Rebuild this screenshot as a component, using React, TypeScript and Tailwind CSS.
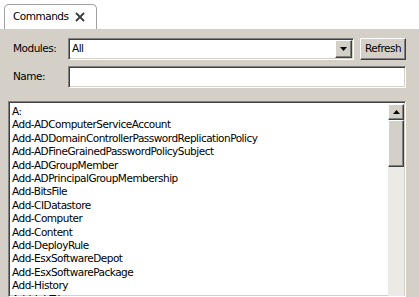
import { Fragment } from "react";

const commands = [
  "A:",
  "Add-ADComputerServiceAccount",
  "Add-ADDomainControllerPasswordReplicationPolicy",
  "Add-ADFineGrainedPasswordPolicySubject",
  "Add-ADGroupMember",
  "Add-ADPrincipalGroupMembership",
  "Add-BitsFile",
  "Add-CIDatastore",
  "Add-Computer",
  "Add-Content",
  "Add-DeployRule",
  "Add-EsxSoftwareDepot",
  "Add-EsxSoftwarePackage",
  "Add-History",
  "Add-JobTrigger",
  "Add-Member",
];

const sunken =
  "border border-t-[#808080] border-l-[#808080] border-b-white border-r-white shadow-[inset_1px_1px_0_#404040,inset_-1px_-1px_0_#d4d0c8] bg-white";
const raised =
  "border border-t-white border-l-white border-b-[#404040] border-r-[#404040] shadow-[inset_-1px_-1px_0_#808080,inset_1px_1px_0_#d4d0c8] bg-[#d4d0c8]";

export default function App() {
  return (
    <Fragment>
      <div className="w-[419px] h-[297px] overflow-hidden flex flex-col bg-[#d4d0c8] text-black font-['DejaVu_Sans',sans-serif] text-[10.5px] tracking-[-0.5px]">
        {/* tab strip */}
        <div className="h-[29px] shrink-0 bg-white flex items-end pl-[4px]">
          <div className="w-[93px] h-[25px] border border-b-0 border-[#a0a0a0] rounded-t-[5px] flex items-center pl-[8px] pb-[1px]">
            <span>Commands</span>
            <svg width="10" height="10" viewBox="0 0 10 10" className="ml-[7px]">
              <path d="M1 1 L9 9 M9 1 L1 9" stroke="#3c3c3c" strokeWidth="1.8" />
            </svg>
          </div>
        </div>

        <div className="flex-1 min-h-0 flex flex-col pl-[8px] pr-[13px] pt-[9px]">
          {/* modules row */}
          <div className="flex items-center h-[22px]">
            <div className="w-[60px] pl-[5px]">Modules:</div>
            <div className={`${sunken} flex-1 h-full flex items-center`}>
              <span className="flex-1 pl-[3px]">All</span>
              <div className={`${raised} w-[17px] h-[18px] mr-[1px] flex items-center justify-center`}>
                <svg width="7" height="4" viewBox="0 0 7 4">
                  <path d="M0 0 H7 L3.5 4 Z" fill="#000" />
                </svg>
              </div>
            </div>
            <button className={`${raised} ml-[6px] w-[46px] h-full flex items-center justify-center`}>
              Refresh
            </button>
          </div>

          {/* name row */}
          <div className="flex items-center h-[22px] mt-[6px]">
            <div className="w-[60px] pl-[5px]">Name:</div>
            <div className={`${sunken} flex-1 h-full`} />
          </div>

          {/* command list */}
          <div className={`${sunken} mt-[13px] flex-1 min-h-0 flex overflow-hidden p-[2px] pr-[1px] pb-0`}>
            <div className="flex-1 pl-[1px] pt-[1px] leading-[13.4px] overflow-hidden">
              {commands.map((c) => (
                <div key={c} className="whitespace-nowrap">
                  {c}
                </div>
              ))}
            </div>
            <div className="w-[16px] flex flex-col bg-[#eceae5]">
              <div className={`${raised} h-[16px] shrink-0 flex items-center justify-center`}>
                <svg width="7" height="4" viewBox="0 0 7 4">
                  <path d="M0 4 H7 L3.5 0 Z" fill="#000" />
                </svg>
              </div>
              <div className={`${raised} h-[47px] shrink-0`} />
            </div>
          </div>
        </div>
      </div>
    </Fragment>
  );
}
